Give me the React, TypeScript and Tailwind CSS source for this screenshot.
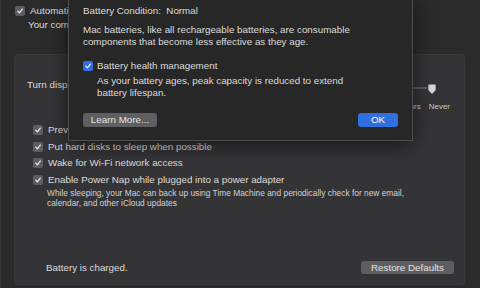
import type { ReactNode } from "react";

function CheckBox({ blue = false }: { blue?: boolean }) {
  return (
    <span
      className={`flex h-[10px] w-[10px] shrink-0 items-center justify-center rounded-[2px] ${
        blue ? "bg-[#2f6fdf]" : "bg-[#5d5d5f]"
      }`}
    >
      <svg viewBox="0 0 10 10" className="h-[8px] w-[8px]">
        <path d="M2.2 5.2 L4.2 7.2 L7.9 2.6" fill="none" stroke="#f2f2f2" strokeWidth="1.5" strokeLinecap="round" strokeLinejoin="round" />
      </svg>
    </span>
  );
}

function CheckRow({ children }: { children: ReactNode }) {
  return (
    <div className="flex h-[16.7px] items-center gap-[5px]">
      <CheckBox />
      <span className="whitespace-nowrap">{children}</span>
    </div>
  );
}

const TICKS = ["1 min", "15 min", "1 hr", "3 hrs", "Never"];

export default function App() {
  return (
    <div className="relative flex h-[288px] w-[480px] flex-col overflow-hidden border-l border-[#3a3a3b] bg-[#2b2b2c] font-['Liberation_Sans',Arial,sans-serif] text-[9.8px] leading-[12px] text-[#dcdcdc]">
      {/* graphics switching */}
      <div className="pl-[14px] pt-[5px]">
        <div className="flex h-[12px] items-center gap-[5px]">
          <CheckBox />
          <span className="whitespace-nowrap">Automatic graphics switching</span>
        </div>
        <p className="mt-[2px] whitespace-nowrap pl-[13px]">
          Your computer will automatically switch between graphics modes for better battery life.
        </p>
      </div>

      {/* settings panel */}
      <section className="ml-[13px] mr-[15px] mt-[23px] flex h-[231px] flex-col rounded-[4px] border border-[#3b3b3d] bg-[#343436] pl-[12px] pr-[10px] pt-[23px]">
        <div className="flex items-start">
          <span className="mt-[1px] whitespace-nowrap">Turn display off after:</span>
          <div className="ml-[30px] flex flex-1 flex-col pr-[4px] pt-[6px]">
            <div className="mr-[13px] flex items-start">
              <div className="mt-[3px] h-[2px] flex-1 bg-[#5c5c5e]" />
              <svg viewBox="0 0 10 12" className="h-[11px] w-[10px] shrink-0">
                <path d="M1 1.5 Q1 0.5 2 0.5 H8 Q9 0.5 9 1.5 V6.5 L5 11 L1 6.5 Z" fill="#d6d6d6" />
              </svg>
            </div>
            <div className="mt-[7px] flex justify-end gap-[8px] text-[8px] leading-[10px] text-[#c8c8c8]">
              {TICKS.map((t) => (
                <span key={t} className="whitespace-nowrap">{t}</span>
              ))}
            </div>
          </div>
        </div>

        <div className="ml-[6px] mt-[9.5px] flex flex-col">
          <CheckRow>Prevent computer from sleeping automatically when the display is off</CheckRow>
          <CheckRow>Put hard disks to sleep when possible</CheckRow>
          <CheckRow>Wake for Wi-Fi network access</CheckRow>
          <CheckRow>Enable Power Nap while plugged into a power adapter</CheckRow>
          <p className="pl-[14px] text-[8.4px] leading-[10px] text-[#d2d2d2]">
            While sleeping, your Mac can back up using Time Machine and periodically check for new email,
            <br />
            calendar, and other iCloud updates
          </p>
        </div>

        <div className="mt-auto flex items-center justify-between pb-[10px] pl-[19px]">
          <span>Battery is charged.</span>
          <button className="flex h-[13px] w-[93px] items-center justify-center rounded-[3px] bg-[#5e5e60] text-[#e2e2e2]">
            Restore Defaults
          </button>
        </div>
      </section>

      {/* battery condition sheet */}
      <div className="absolute left-[67px] top-[-4px] flex h-[145px] w-[345px] flex-col border border-[#4e4e50] bg-[#272727] px-[14px] pt-[8px] shadow-[0_4px_18px_rgba(0,0,0,0.55)]">
        <p>Battery Condition:&nbsp; Normal</p>
        <p className="mt-[7px]">
          Mac batteries, like all rechargeable batteries, are consumable
          <br />
          components that become less effective as they age.
        </p>
        <div className="mt-[12px] flex h-[12px] items-center gap-[4px]">
          <CheckBox blue />
          <span>Battery health management</span>
        </div>
        <p className="mt-[3px] pl-[14px]">
          As your battery ages, peak capacity is reduced to extend
          <br />
          battery lifespan.
        </p>
        <div className="mt-[14px] flex justify-between">
          <button className="flex h-[14px] w-[74px] items-center justify-center rounded-[3px] bg-[#5f5f61] text-[#e2e2e2]">
            Learn More...
          </button>
          <button className="flex h-[14px] w-[40px] items-center justify-center rounded-[3px] bg-[#2f6fdf] text-white">
            OK
          </button>
        </div>
      </div>
    </div>
  );
}
